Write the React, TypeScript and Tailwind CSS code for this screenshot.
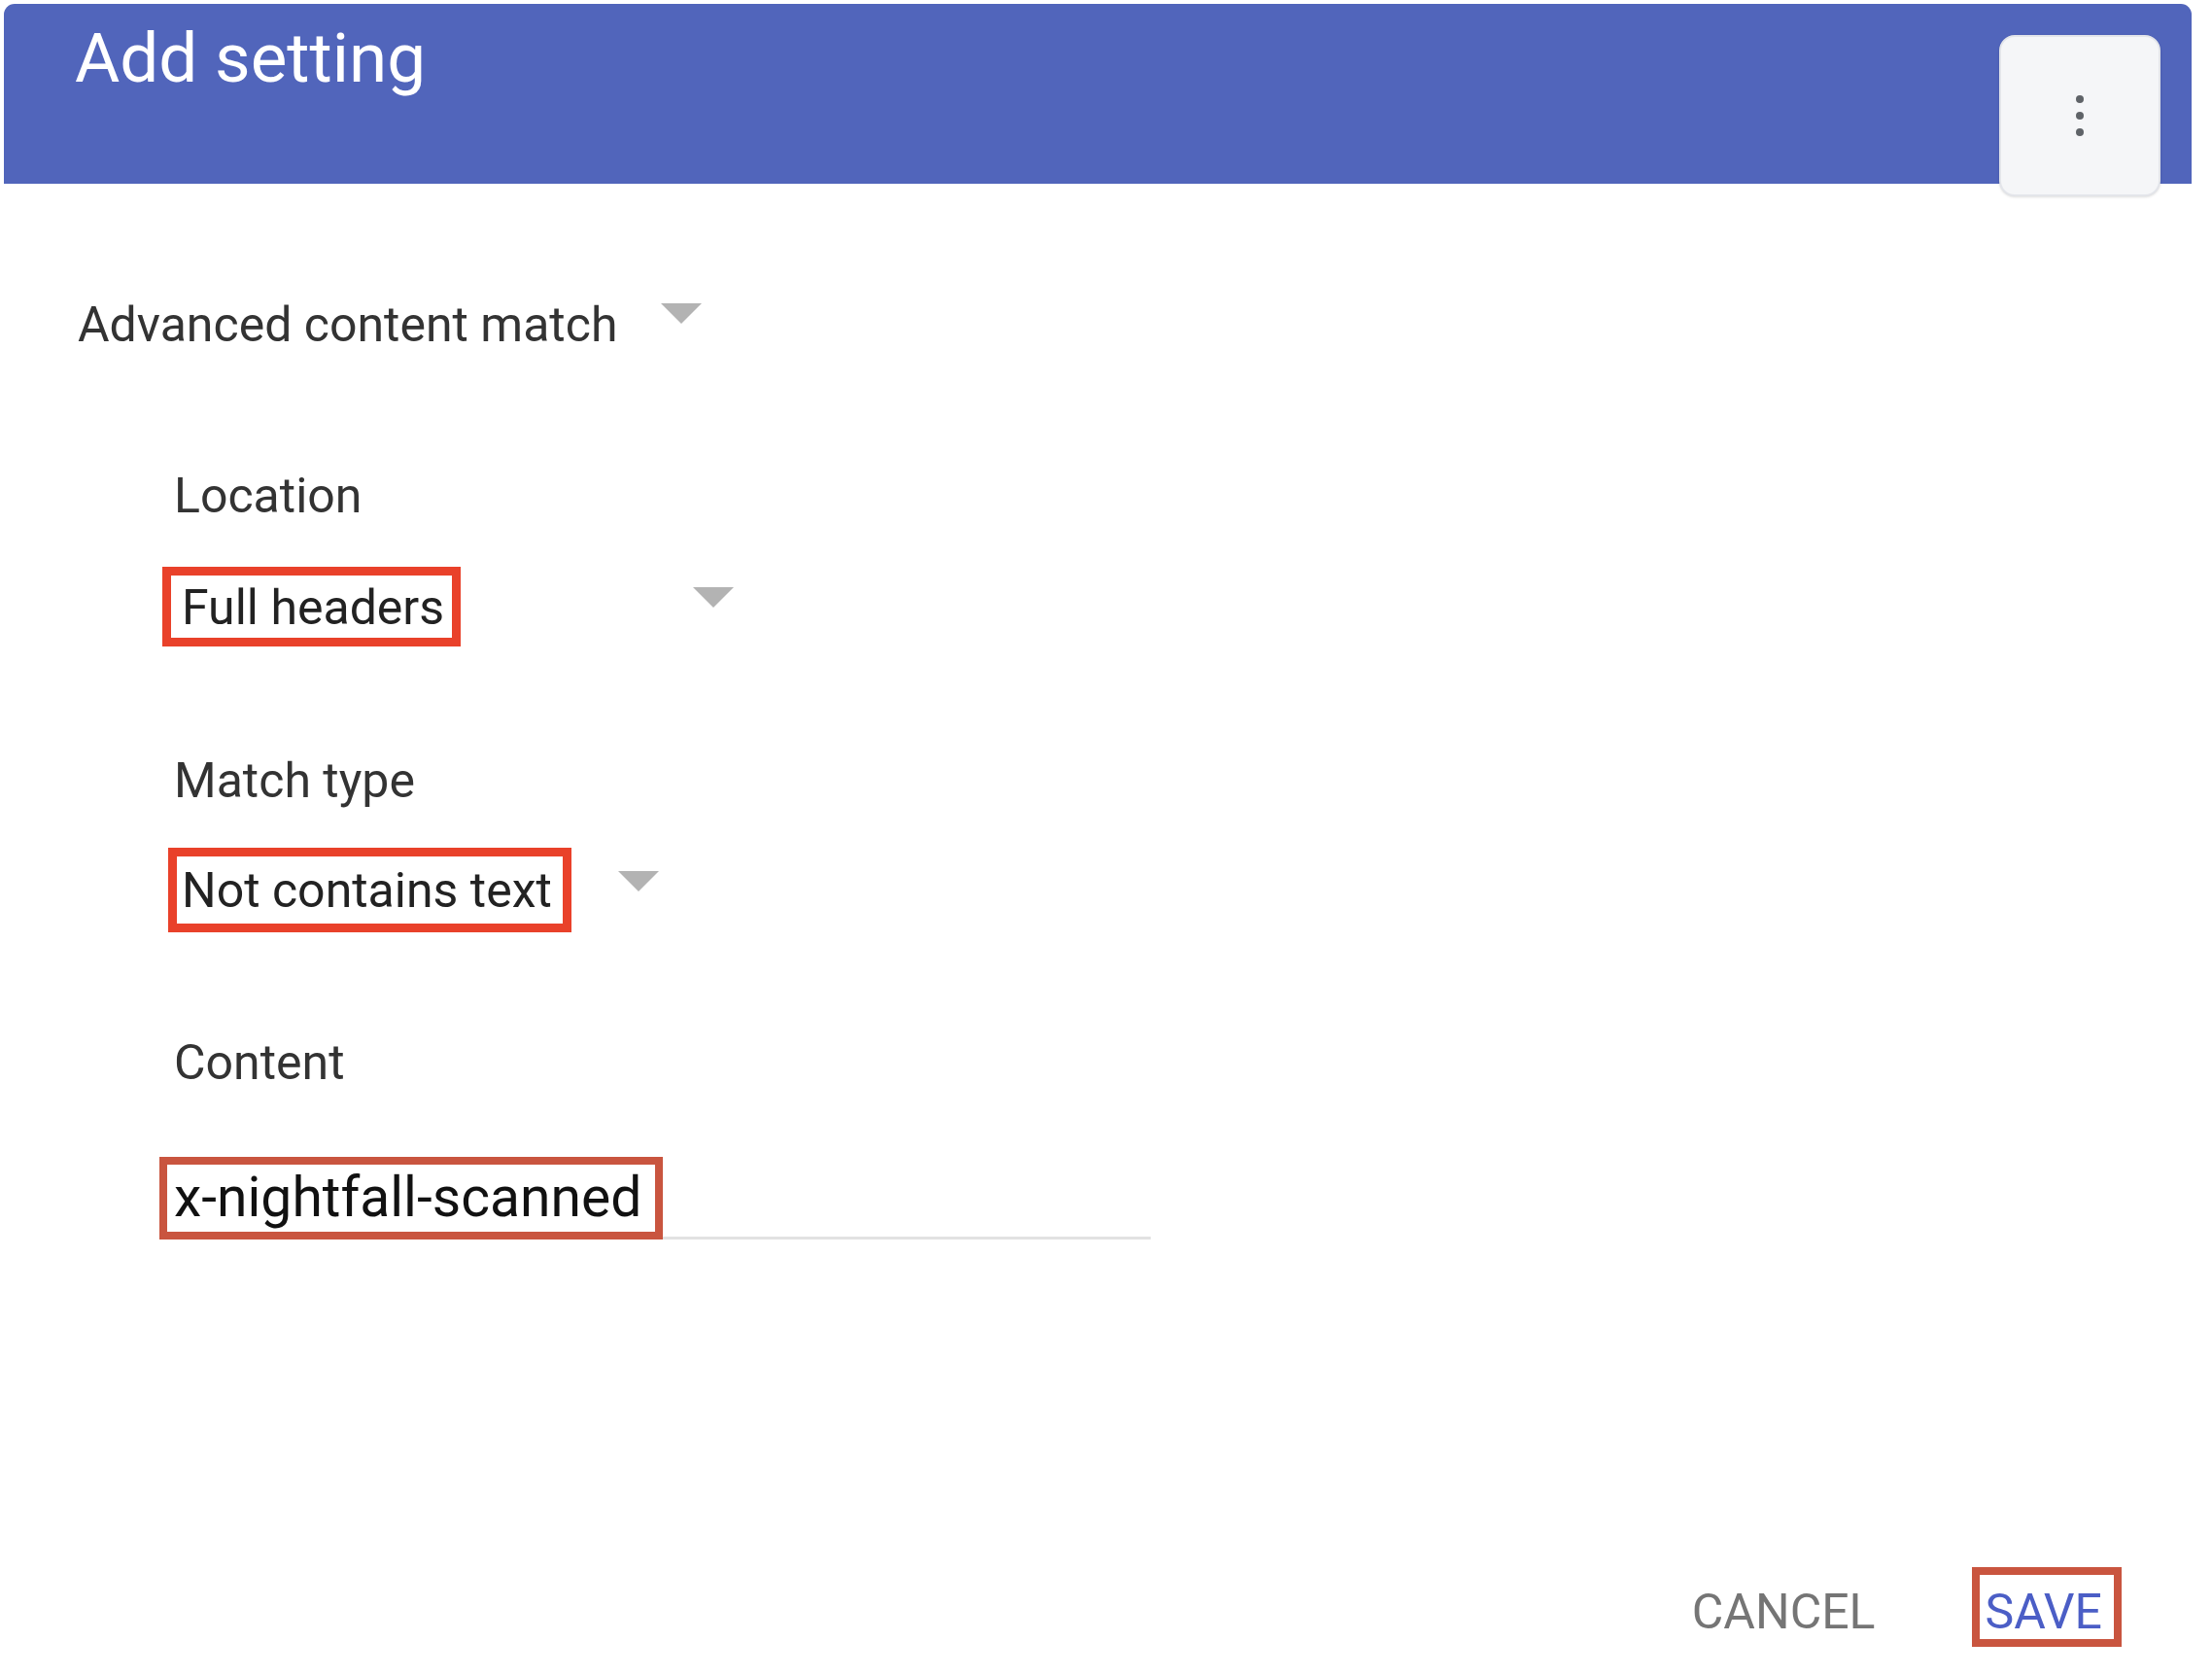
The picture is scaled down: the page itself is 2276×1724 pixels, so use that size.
function Caret({ className }: { className?: string }) {
  return (
    <svg className={className} width="42" height="21" viewBox="0 0 42 21">
      <polygon points="0,0 42,0 21,21" fill="#b3b3b3" />
    </svg>
  );
}

function App() {
  return (
    <div className="relative w-[2276px] h-[1724px] bg-white pt-[4px] font-['Roboto',sans-serif]">
      {/* dialog header */}
      <div className="relative ml-[4px] h-[185px] w-[2251px] rounded-t-[11px] bg-[#5165bb] pl-[73px] pt-[20px]">
        <h1 className="text-[71px] leading-none text-white font-normal">Add setting</h1>
        <button className="absolute left-[2053px] top-[32px] flex h-[166px] w-[166px] flex-col items-center justify-center gap-[9px] rounded-[16px] border-2 border-[#e3e5ea] bg-[#f5f6f8] shadow-sm">
          <span className="h-[8px] w-[8px] rounded-full bg-[#5f6368]" />
          <span className="h-[8px] w-[8px] rounded-full bg-[#5f6368]" />
          <span className="h-[8px] w-[8px] rounded-full bg-[#5f6368]" />
        </button>
      </div>

      {/* form */}
      <div className="pl-[80px] pt-[120px]">
        <div className="flex items-start">
          <span className="text-[50px] leading-[50px] text-[#333333]">Advanced content match</span>
          <Caret className="ml-[45px] mt-[3px]" />
        </div>

        <div className="pl-[99px]">
          <p className="mt-[126px] text-[50px] leading-[50px] text-[#333333]">Location</p>
          <div className="mt-[48px] -ml-[12px] flex items-start">
            <div className="border-[9px] border-[#e9412a] pl-[11px] pr-[8px] pt-[8px] pb-[6px] text-[50px] leading-[50px] text-[#222222]">
              Full headers
            </div>
            <Caret className="ml-[239px] mt-[21px]" />
          </div>

          <p className="mt-[113px] text-[50px] leading-[50px] text-[#333333]">Match type</p>
          <div className="mt-[44px] -ml-[6px] flex items-start">
            <div className="border-[9px] border-[#e9412a] pl-[5px] pr-[11px] pt-[10px] pb-[9px] text-[50px] leading-[50px] text-[#222222]">
              Not contains text
            </div>
            <Caret className="ml-[48px] mt-[24px]" />
          </div>

          <p className="mt-[109px] text-[50px] leading-[50px] text-[#333333]">Content</p>
          <div className="mt-[72px] -ml-[15px] flex w-[1020px] items-end">
            <div className="border-[8px] border-[#c9553f] pl-[7px] pr-[14px] pt-[5px] pb-[7px] text-[57px] leading-[57px] text-[#111111]">
              x-nightfall-scanned
            </div>
            <div className="flex-1 border-b-[3px] border-[#e2e2e2]" />
          </div>
        </div>
      </div>

      {/* actions */}
      <div className="mt-[337px] flex items-start justify-end pr-[93px]">
        <button className="mt-[21px] text-[50px] leading-[50px] text-[#757575]">CANCEL</button>
        <button className="ml-[99px] border-[8px] border-[#c9553f] pl-[6px] pr-[12px] pt-[13px] pb-[3px] text-[50px] leading-[50px] text-[#4b5ec6]">
          SAVE
        </button>
      </div>
    </div>
  );
}

export default App;
